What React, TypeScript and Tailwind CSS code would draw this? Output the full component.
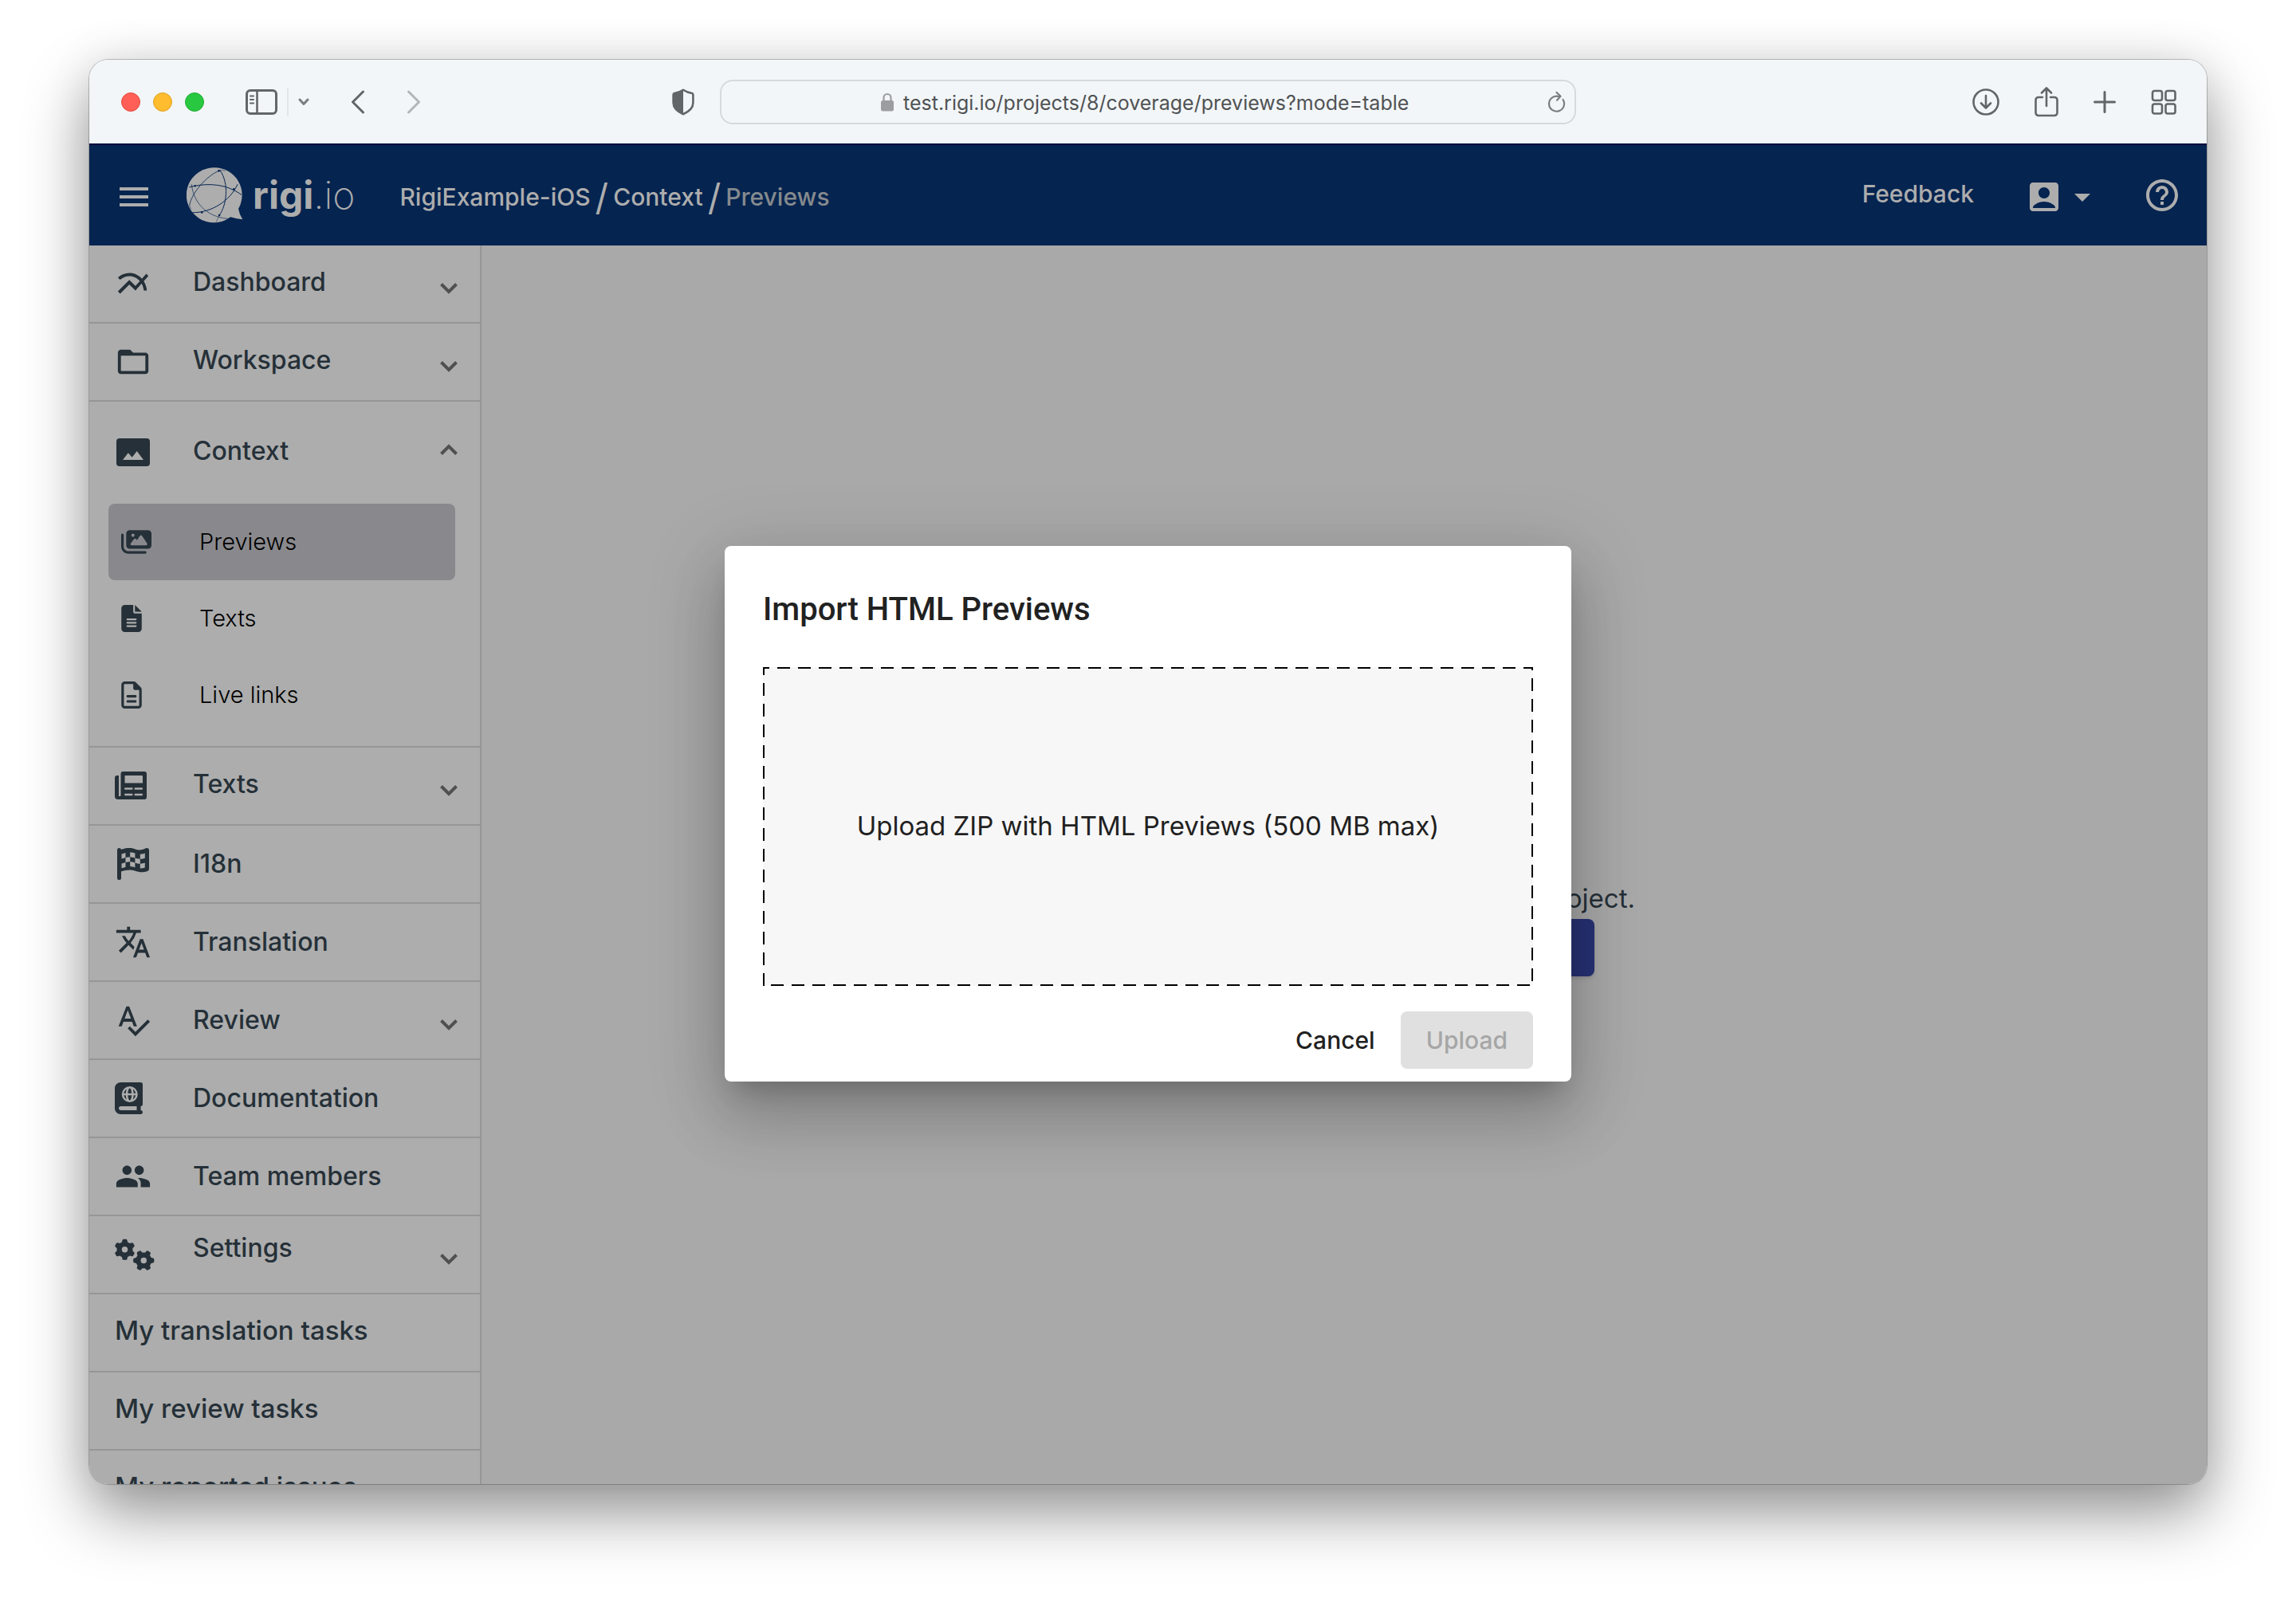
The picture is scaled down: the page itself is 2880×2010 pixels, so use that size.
import type { ComponentType, ReactNode, SVGProps } from "react";
import {
  MdAccountBox,
  MdArrowDropDown,
  MdFolderOpen,
  MdGroup,
  MdHelpOutline,
  MdMenu,
  MdMultilineChart,
  MdSpellcheck,
  MdTranslate,
} from "react-icons/md";
import { FaBookAtlas, FaFileLines, FaGears, FaImages, FaRegFileLines } from "react-icons/fa6";

type Icon = ComponentType<{ className?: string }>;

/* ---------- drawn icons ---------- */

function Stroke(props: SVGProps<SVGSVGElement>) {
  return (
    <svg
      fill="none"
      stroke="currentColor"
      strokeWidth="3"
      strokeLinecap="round"
      strokeLinejoin="round"
      aria-hidden="true"
      {...props}
    />
  );
}

function SidebarIcon() {
  return (
    <Stroke viewBox="0 0 40 32" className="h-8 w-10">
      <rect x="1.5" y="1.5" width="37" height="29" rx="4.5" />
      <path d="M14.5 2v28" strokeWidth="2.6" />
      <path d="M6 8.5h4M6 13h4M6 17.5h4" strokeWidth="2.2" />
    </Stroke>
  );
}

function ShieldIcon() {
  return (
    <svg viewBox="0 0 28 34" className="h-[34px] w-7" aria-hidden="true">
      <path
        d="M14 1.8 C17.5 4.2 22 5.6 25 6 C26 6.2 26.4 6.8 26.4 8 V18 C26.4 25 20.5 29.3 14 32.2 C7.5 29.3 1.6 25 1.6 18 V8 C1.6 6.8 2 6.2 3 6 C6 5.6 10.5 4.2 14 1.8 Z"
        fill="none"
        stroke="currentColor"
        strokeWidth="2.6"
        strokeLinejoin="round"
      />
      <path
        d="M14 1.8 V32.2 C7.5 29.3 1.6 25 1.6 18 V8 C1.6 6.8 2 6.2 3 6 C6 5.6 10.5 4.2 14 1.8 Z"
        fill="currentColor"
      />
    </svg>
  );
}

function LockIcon() {
  return (
    <svg viewBox="0 0 16 24" className="h-6 w-4 text-[#9b9d9f]" aria-hidden="true">
      <rect x="0" y="10" width="16" height="13.5" rx="2.5" fill="currentColor" />
      <path d="M3.5 11V6.5a4.5 4.5 0 0 1 9 0V11" fill="none" stroke="currentColor" strokeWidth="2.2" />
    </svg>
  );
}

function ChevronIcon({ up = false }: { up?: boolean }) {
  return (
    <svg viewBox="0 0 22 14" className="h-3.5 w-[22px] text-[#505050]" aria-hidden="true">
      <path
        d={up ? "M1.500 12.500L11 3l9.500 9.500" : "M1.500 1.500L11 11l9.500-9.500"}
        fill="none"
        stroke="currentColor"
        strokeWidth="4"
      />
    </svg>
  );
}

function ContextIcon({ className }: { className?: string }) {
  return (
    <svg viewBox="0 0 46 38" className={className} fill="currentColor" aria-hidden="true">
      <path
        fillRule="evenodd"
        d="M6 1h34a4 4 0 0 1 4 4v27a4 4 0 0 1-4 4H6a4 4 0 0 1-4-4V5a4 4 0 0 1 4-4Zm4 27h26L27.7 17l-6 7.800-4.900-5.600Z"
      />
    </svg>
  );
}

function TextTableIcon({ className }: { className?: string }) {
  return (
    <svg viewBox="0 0 40 40" className={className} fill="currentColor" aria-hidden="true">
      <path d="M5 7H3a3 3 0 0 0-3 3v23a4 4 0 0 0 4 4h4V33H5Z" />
      <path
        fillRule="evenodd"
        d="M10.5 2H37a3 3 0 0 1 3 3v29a3 3 0 0 1-3 3H4v-3c2 .5 3.5-.5 3.5-2.5V5a3 3 0 0 1 3-3Zm3 5a1 1 0 0 0-1 1v8.500h22.500V8a1 1 0 0 0-1-1Zm-.2 15.200a1.300 1.300 0 0 0 0 2.600h8a1.300 1.300 0 0 0 0-2.600Zm12.500 0a1.300 1.300 0 0 0 0 2.600h8a1.300 1.300 0 0 0 0-2.600Zm-12.500 7.500a1.300 1.300 0 0 0 0 2.600h8a1.300 1.300 0 0 0 0-2.600Zm12.500 0a1.300 1.300 0 0 0 0 2.600h8a1.300 1.300 0 0 0 0-2.600Z"
      />
    </svg>
  );
}

function FlagIcon({ className }: { className?: string }) {
  return (
    <svg viewBox="-3 0 43 40" className={className} fill="currentColor" aria-hidden="true">
      <path d="M2.5 0A2.500 2.500 0 0 0 0 2.500V38a2 2 0 0 0 2 2h1a2 2 0 0 0 2-2V2.500A2.500 2.500 0 0 0 2.500 0Z" />
      <path
        fillRule="evenodd"
        d="M4 2.500C9 0 17-1.200 22 1.200c4.500 2 9 1.600 13.500-.7C37.500-.4 40 .2 40 2.800V26c0 1.500-.8 2.500-2 3-6 2.200-11 1-16-.6C16.500 26.800 11 27.600 4 29.800Z
        M5.500 7.500v6l5-1.400v-6Z M16.200 5.300v5.900c2.300.1 4 .5 6.200 1.300V6.600c-2.200-.8-3.900-1.200-6.200-1.300Z M28.800 7.700v6c2.200 0 4-.3 6-1V6.500c-2 .8-3.800 1.200-6 1.200Z
        M10.500 12.100v6c2-.5 3.600-.9 5.700-.9v-6c-2.100 0-3.700.3-5.700.9Z M22.400 12.500v5.900c2.200.8 4 1.200 6.400 1.300v-6c-2.400 0-4.200-.400-6.400-1.200Z
        M5.500 19.500v5.800l5-1.400v-5.800Z M16.200 17.200v5.900c2.300.1 4 .5 6.200 1.300v-6c-2.200-.8-3.900-1.100-6.200-1.200Z M28.800 19.700v5.900c2.200 0 4-.3 6-1v-6c-2 .8-3.800 1.100-6 1.100Z"
      />
    </svg>
  );
}

function Logo() {
  return (
    <a href="#home" aria-label="rigi.io" className="flex items-center gap-3 text-[#adadad]">
      <svg viewBox="26 28 214 211" className="h-[70px] w-[71px]" aria-hidden="true">
        <path
          d="M131 29a104 104 0 1 0 61 187q24 7 46 9q-12-18-16-40A104 104 0 0 0 131 29Z"
          fill="currentColor"
        />
        <g fill="none" stroke="#052450" strokeWidth="3">
          <path d="M152 38C188 90 178 170 150 209" />
          <path d="M148 41C100 62 45 125 37 172" strokeWidth="2.5" />
          <path d="M36 103C110 84 180 92 234 132" />
          <path d="M45 92C52 160 100 215 182 222" strokeWidth="2" />
          <path d="M219 92C190 155 120 200 48 199" />
          <path d="M148 41Q160 34 172 42M150 209l-12 26M37 172l6 14" strokeWidth="1.5" />
        </g>
        <g fill="#052450">
          <circle cx="148" cy="41" r="4" />
          <circle cx="58" cy="98" r="4" />
          <circle cx="205" cy="110" r="4" />
          <circle cx="84" cy="198" r="4" />
          <circle cx="150" cy="209" r="4" />
        </g>
      </svg>
      <span className="text-[48px] leading-none">
        <span className="font-bold">rigi</span>
        <span className="font-extralight">.io</span>
      </span>
    </a>
  );
}

/* ---------- browser toolbar ---------- */

function ToolButton({ label, children }: { label: string; children: ReactNode }) {
  return (
    <button type="button" aria-label={label} className="flex items-center justify-center">
      {children}
    </button>
  );
}

function BrowserToolbar() {
  return (
    <div className="grid h-[105px] shrink-0 grid-cols-[1fr_1074px_1fr] items-center bg-[#f2f6f8] text-[#636668]">
      <div className="flex items-center pl-10">
        <div className="flex gap-4">
          <span className="size-6 rounded-full border border-[#e24b41] bg-[#ff5f57]" />
          <span className="size-6 rounded-full border border-[#e1a325] bg-[#febc2e]" />
          <span className="size-6 rounded-full border border-[#24ab33] bg-[#28c840]" />
        </div>
        <div className="flex items-center gap-3 pl-13">
          <ToolButton label="Sidebar">
            <SidebarIcon />
          </ToolButton>
          <span className="h-9 w-0.5 bg-[#e3e6e8]" />
          <ToolButton label="Tab groups">
            <Stroke viewBox="0 0 14 10" className="h-2.5 w-3.5 text-[#7b7e80]">
              <path d="M2 2l5 5.5L12 2" />
            </Stroke>
          </ToolButton>
        </div>
        <div className="flex items-center gap-13 pl-13">
          <ToolButton label="Back">
            <Stroke viewBox="0 0 18 30" className="h-[30px] w-[18px]">
              <path d="M15.5 2L2.5 15l13 13" />
            </Stroke>
          </ToolButton>
          <ToolButton label="Forward">
            <Stroke viewBox="0 0 18 30" className="h-[30px] w-[18px] text-[#b3b6b8]">
              <path d="M2.5 2l13 13-13 13" />
            </Stroke>
          </ToolButton>
        </div>
        <div className="ml-auto flex pr-8">
          <ToolButton label="Privacy report">
            <ShieldIcon />
          </ToolButton>
        </div>
      </div>

      <div className="flex h-14 items-center rounded-2xl border-2 border-[#d7dadc] pr-2.5 pl-8">
        <label className="flex flex-1 items-center justify-center gap-3">
          <LockIcon />
          <input
            aria-label="Address"
            readOnly
            value="test.rigi.io/projects/8/coverage/previews?mode=table"
            className="w-[640px] bg-transparent pt-1 text-[25px] text-[#505254] outline-none"
          />
        </label>
        <ToolButton label="Reload">
          <Stroke viewBox="0 0 24 28" strokeWidth="2.2" className="h-7 w-6 text-[#7b7e80]">
            <path d="M19.500 11A9.500 9.500 0 1 1 13 6.800h3" />
            <path d="M11.5 2l5 4.8-4.5 5" />
          </Stroke>
        </ToolButton>
      </div>

      <div className="flex items-center justify-end gap-11 pr-[38px]">
        <ToolButton label="Downloads">
          <Stroke viewBox="0 0 34 34" strokeWidth="2.6" className="size-[34px]">
            <circle cx="17" cy="17" r="15.5" />
            <path d="M17 9v15M11 18.5l6 6 6-6" />
          </Stroke>
        </ToolButton>
        <ToolButton label="Share">
          <Stroke viewBox="0 0 30 38" strokeWidth="2.6" className="h-[38px] w-[30px]">
            <path d="M10 13H5a3.5 3.5 0 0 0-3.5 3.5v16A3.5 3.5 0 0 0 5 36h20a3.5 3.5 0 0 0 3.5-3.5v-16A3.5 3.5 0 0 0 25 13h-5" />
            <path d="M15 24V2M9 7.5l6-6 6 6" />
          </Stroke>
        </ToolButton>
        <ToolButton label="New tab">
          <Stroke viewBox="0 0 28 28" className="size-7">
            <path d="M14 1.5v25M1.5 14h25" />
          </Stroke>
        </ToolButton>
        <ToolButton label="Tab overview">
          <Stroke viewBox="0 0 32 32" strokeWidth="2.6" className="size-8">
            <rect x="2" y="2" width="12" height="12" rx="2.5" />
            <rect x="18.5" y="2" width="12" height="12" rx="2.5" />
            <rect x="2" y="18.5" width="12" height="12" rx="2.5" />
            <rect x="18.5" y="18.5" width="12" height="12" rx="2.5" />
          </Stroke>
        </ToolButton>
      </div>
    </div>
  );
}

/* ---------- app header ---------- */

function AppHeader() {
  return (
    <header className="flex h-32 shrink-0 items-center border-t-2 border-[#020b3c] bg-[#052450] px-8 text-[30px] font-medium text-[#adadad]">
      <button type="button" aria-label="Menu" className="mr-[42px] pt-1">
        <MdMenu className="size-12" />
      </button>
      <Logo />
      <nav aria-label="Breadcrumb" className="flex items-center gap-1.5 pt-1 pl-14">
        <a href="#project">RigiExample-iOS</a>
        <span className="text-[46px] leading-none font-normal">/</span>
        <a href="#context">Context</a>
        <span className="text-[46px] leading-none font-normal">/</span>
        <a href="#previews" className="text-[#858a8e]">
          Previews
        </a>
      </nav>
      <div className="ml-auto flex items-center">
        <a href="#feedback" className="pb-1">
          Feedback
        </a>
        <button type="button" aria-label="Account" className="flex items-center pt-1 pl-16">
          <MdAccountBox className="size-12" />
          <MdArrowDropDown className="size-12" />
        </button>
        <button type="button" aria-label="Help" className="pl-13">
          <MdHelpOutline className="size-12" />
        </button>
      </div>
    </header>
  );
}

/* ---------- sidebar ---------- */

interface MenuItem {
  label: string;
  icon: Icon;
  iconClass: string;
  labelClass?: string;
  expandable?: boolean;
}

const topItems: MenuItem[] = [
  { label: "Dashboard", icon: MdMultilineChart, iconClass: "size-[46px]", labelClass: "pb-1", expandable: true },
  { label: "Workspace", icon: MdFolderOpen, iconClass: "size-[46px]", labelClass: "pb-1", expandable: true },
];

const bottomItems: MenuItem[] = [
  { label: "Texts", icon: TextTableIcon, iconClass: "size-10", labelClass: "pb-1", expandable: true },
  { label: "I18n", icon: FlagIcon, iconClass: "h-10 w-[43px]" },
  { label: "Translation", icon: MdTranslate, iconClass: "size-[46px]" },
  { label: "Review", icon: MdSpellcheck, iconClass: "size-[46px]", expandable: true },
  { label: "Documentation", icon: FaBookAtlas, iconClass: "h-10 w-[35px]" },
  { label: "Team members", icon: MdGroup, iconClass: "size-[46px]" },
  { label: "Settings", icon: FaGears, iconClass: "h-10 w-[50px]", labelClass: "pb-4", expandable: true },
];

const contextItems = [
  { label: "Previews", icon: FaImages, iconClass: "h-[34px] w-[38px]", active: true },
  { label: "Texts", icon: FaFileLines, iconClass: "h-[34px] w-[26px]", active: false },
  { label: "Live links", icon: FaRegFileLines, iconClass: "h-[34px] w-[26px]", active: false },
];

const taskLinks = ["My translation tasks", "My review tasks", "My reported issues"];

function SidebarRow({ item }: { item: MenuItem }) {
  const ItemIcon = item.icon;
  return (
    <li className="border-b-2 border-[#969696]">
      <button type="button" className="flex h-24 w-full items-center pr-7 pl-8 text-left">
        <span className="w-[98px]">
          <ItemIcon className={item.iconClass} />
        </span>
        <span className={item.labelClass}>{item.label}</span>
        {item.expandable && (
          <span className="ml-auto pt-3">
            <ChevronIcon />
          </span>
        )}
      </button>
    </li>
  );
}

function Sidebar() {
  return (
    <aside className="w-[492px] shrink-0 overflow-hidden border-r-2 border-[#969696] bg-[#adadad] text-[32px] font-medium text-[#253038]">
      <ul>
        {topItems.map((item) => (
          <SidebarRow key={item.label} item={item} />
        ))}
        <li className="border-b-2 border-[#969696] pb-4">
          <button type="button" aria-expanded="true" className="flex h-32 w-full items-center pr-7 pl-8 text-left">
            <span className="w-[98px]">
              <ContextIcon className="h-[38px] w-[46px]" />
            </span>
            <span className="pb-1">Context</span>
            <span className="ml-auto pb-2">
              <ChevronIcon up />
            </span>
          </button>
          <ul className="pr-[31px] pl-6 text-[29px] font-light text-black">
            {contextItems.map(({ label, icon: ItemIcon, iconClass, active }) => (
              <li key={label}>
                <a
                  href={`#${label}`}
                  aria-current={active ? "page" : undefined}
                  className={`flex h-24 items-center rounded-lg pl-4 ${active ? "bg-[#89898d]" : ""}`}
                >
                  <span className="w-[98px] text-[#253038]">
                    <ItemIcon className={iconClass} />
                  </span>
                  {label}
                </a>
              </li>
            ))}
          </ul>
        </li>
        {bottomItems.map((item) => (
          <SidebarRow key={item.label} item={item} />
        ))}
        {taskLinks.map((label) => (
          <li key={label} className="border-b-2 border-[#969696] text-[33px]">
            <a href={`#${label}`} className="flex h-24 items-center pb-1 pl-8">
              {label}
            </a>
          </li>
        ))}
      </ul>
    </aside>
  );
}

/* ---------- dialog ---------- */

function ImportDialog() {
  return (
    <div className="absolute inset-0 flex items-center justify-center">
      <section
        role="dialog"
        aria-modal="true"
        aria-labelledby="import-title"
        className="w-[1062px] rounded-lg bg-white px-12 pb-4 shadow-[0_22px_30px_-14px_rgba(0,0,0,0.2),0_48px_76px_6px_rgba(0,0,0,0.14),0_18px_92px_16px_rgba(0,0,0,0.12)]"
      >
        <h2
          id="import-title"
          className="pt-[52px] pb-[44px] font-['Roboto'] text-[40px] leading-[56px] font-medium text-[#212121]"
        >
          Import HTML Previews
        </h2>
        <label className="relative flex h-[400px] cursor-pointer items-center justify-center overflow-hidden bg-[#f7f7f7] text-[33px] text-[#212121]">
          <svg className="absolute inset-0 size-full" aria-hidden="true">
            <rect
              width="100%"
              height="100%"
              fill="none"
              stroke="#000"
              strokeWidth="4"
              strokeDasharray="16 10"
              strokeDashoffset="8"
            />
          </svg>
          Upload ZIP with HTML Previews (500 MB max)
          <input type="file" accept=".zip" className="sr-only" />
        </label>
        <div className="flex justify-end pt-8 text-[30px] font-medium">
          <button type="button" className="h-[72px] px-8 text-[#212121]">
            Cancel
          </button>
          <button type="button" disabled className="h-[72px] rounded-lg bg-[#e0e0e0] px-8 text-[#a6a6a6]">
            Upload
          </button>
        </div>
      </section>
    </div>
  );
}

export default function App() {
  return (
    <div className="h-screen bg-white px-28 pt-[75px] pb-[148px] font-['Inter',sans-serif]">
      <div className="flex h-full flex-col rounded-3xl shadow-[0_0_0_1px_rgba(0,0,0,0.22),0_36px_80px_0_rgba(0,0,0,0.42),0_0_60px_0_rgba(0,0,0,0.08)]">
        <div className="flex min-h-0 flex-1 flex-col overflow-hidden rounded-3xl">
          <BrowserToolbar />
          <div className="relative flex min-h-0 flex-1 flex-col">
            <AppHeader />
            <div className="flex min-h-0 flex-1">
              <Sidebar />
              <main className="flex flex-1 flex-col items-center justify-center bg-[#a9a9a9] pt-[162px]">
                <p className="w-[730px] pb-1.5 text-right text-[33px] leading-10 text-[#253038]">
                  There are no previews in this project.
                </p>
                <button
                  type="button"
                  className="h-[72px] w-[628px] rounded-lg bg-[#283275] text-[30px] font-medium text-[#adadad] shadow-md"
                >
                  Import HTML previews
                </button>
              </main>
            </div>
            <ImportDialog />
          </div>
        </div>
      </div>
    </div>
  );
}
